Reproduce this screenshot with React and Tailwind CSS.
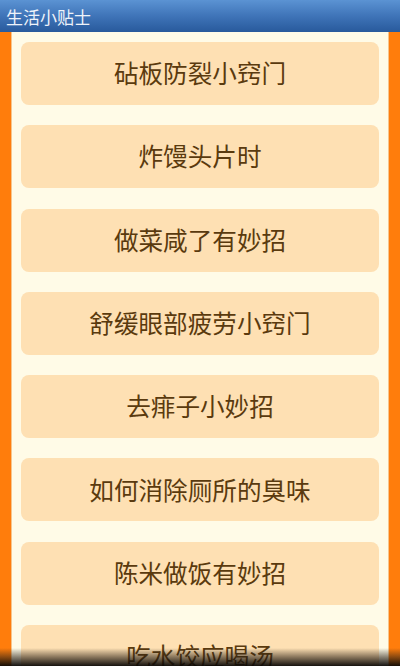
import React from "react";

const tips = [
  "砧板防裂小窍门",
  "炸馒头片时",
  "做菜咸了有妙招",
  "舒缓眼部疲劳小窍门",
  "去痱子小妙招",
  "如何消除厕所的臭味",
  "陈米做饭有妙招",
  "吃水饺应喝汤",
];

export default function App() {
  return (
    <div
      className="relative flex h-[666px] w-[400px] flex-col overflow-hidden"
      style={{ fontFamily: '"Noto Sans CJK SC", "Noto Sans", sans-serif' }}
    >
      {/* title bar */}
      <div className="flex h-[32px] shrink-0 items-center bg-gradient-to-b from-[#5b93d3] via-[#3f74b8] to-[#285a9c] px-[6px] shadow-[0_1px_2px_rgba(0,0,0,0.4)]">
        <span className="text-[17px] leading-none text-[#eef3fa]">生活小贴士</span>
      </div>

      {/* list area framed by orange */}
      <div className="flex flex-1 bg-[#ff7d0c] px-[11px]">
        <div className="flex flex-1 flex-col gap-[20.3px] border-x border-[#f7c58a] bg-[#fffbe7] px-[9px] pt-[10px]">
          {tips.map((t) => (
            <div
              key={t}
              className="flex h-[63px] shrink-0 items-center justify-center rounded-[8px] bg-[#fee0b3] pb-[2px] text-[24.6px] text-[#5a3a0e]"
            >
              {t}
            </div>
          ))}
        </div>
      </div>

      {/* bottom shade */}
      <div className="pointer-events-none absolute bottom-0 left-0 h-[18px] w-full bg-gradient-to-b from-transparent via-[rgba(40,30,20,0.55)] to-[rgba(10,8,6,0.95)]" />
    </div>
  );
}
